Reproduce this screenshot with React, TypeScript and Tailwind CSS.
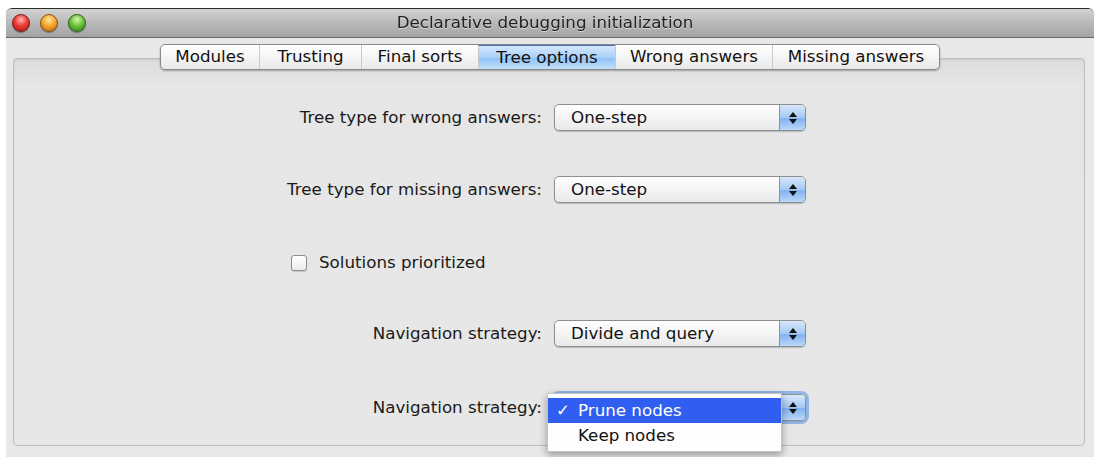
import React from 'react'

const tabs = ['Modules', 'Trusting', 'Final sorts', 'Tree options', 'Wrong answers', 'Missing answers']
const tabWidths = ['w-[98px]', 'w-[102px]', 'w-[117px]', 'w-[137px]', 'w-[157px]', 'w-[167px]']

const font = { fontFamily: '"DejaVu Sans", "Liberation Sans", sans-serif' }

const Light = ({ tone }: { tone: 'red' | 'amber' | 'green' }) => {
    const fill = {
        red: 'bg-[radial-gradient(circle_at_50%_30%,#ffb3b0_0%,#ec3b36_45%,#a8110f_100%)] border-[#7a1a18]',
        amber: 'bg-[radial-gradient(circle_at_50%_30%,#ffe6a6_0%,#f3a92b_45%,#b9600a_100%)] border-[#8a5212]',
        green: 'bg-[radial-gradient(circle_at_50%_30%,#d6f5b0_0%,#6cc23c_45%,#2f7e12_100%)] border-[#2d6618]',
    }[tone]
    return <div className={`w-[18px] h-[18px] rounded-full border ${fill} shadow-[0_1px_1px_rgba(0,0,0,0.35)]`} />
}

const Arrows = () => (
    <div className="w-[26px] h-full border-l border-[#7d96bd] rounded-r-[4px] bg-[linear-gradient(#d9e8fb,#a4c8f3_50%,#7fb1ee_51%,#b9d8f9)] flex flex-col items-center justify-center gap-[2px]">
        <svg width="8" height="5" viewBox="0 0 8 5"><path d="M4 0L8 5H0z" fill="#111" /></svg>
        <svg width="8" height="5" viewBox="0 0 8 5"><path d="M0 0h8L4 5z" fill="#111" /></svg>
    </div>
)

const Select = ({ value, focused }: { value: string; focused?: boolean }) => (
    <div
        className={`w-[252px] h-[27px] flex items-stretch rounded-[5px] border border-[#8f8f8f] bg-[linear-gradient(#ffffff,#f4f4f4_50%,#e9e9e9)] shadow-[0_1px_1px_rgba(0,0,0,0.2)] ${focused ? 'ring-[3px] ring-[#6f9fe4]/70' : ''}`}
    >
        <div className={`flex-1 flex items-center pl-4 text-[16.7px] ${focused ? 'text-[#111]/40' : 'text-[#111]'}`}>{value}</div>
        <Arrows />
    </div>
)

const Row = ({ label, children, className }: { label: string; children: React.ReactNode; className?: string }) => (
    <div className={`flex items-center h-[27px] ${className ?? ''}`}>
        <div className="w-[528px] text-right text-[16.7px] text-[#1a1a1a]">{label}</div>
        <div className="ml-[12px] relative">{children}</div>
    </div>
)

export default function App() {
    return (
        <div className="w-[1094px] h-[457px] bg-white pt-[8px] overflow-hidden" style={font}>
            <div className="ml-[6px] h-[449px] flex flex-col border-t border-[#2d2d2d] rounded-t-[6px] bg-[#e8e8e8]">
                {/* title bar */}
                <div className="h-[29px] shrink-0 flex items-center rounded-t-[5px] bg-[linear-gradient(#d3d3d3,#b9b9b9_50%,#a3a3a3)] border-b border-[#666]">
                    <div className="flex items-center gap-[10px] pl-[6px]">
                        <Light tone="red" />
                        <Light tone="amber" />
                        <Light tone="green" />
                    </div>
                    <div className="flex-1 text-center text-[16.7px] text-[#222] pr-[90px] drop-shadow-[0_1px_0_rgba(255,255,255,0.5)]">
                        Declarative debugging initialization
                    </div>
                </div>

                <div className="flex-1 pl-[7px] pr-[9px] pt-[6px]">
                    {/* tab strip */}
                    <div className="relative z-10 flex ml-[147px]">
                        <div className="flex h-[26px] rounded-[5px] border border-[#8a8a8a] overflow-hidden bg-[linear-gradient(#ffffff,#f5f5f5_50%,#e8e8e8)] shadow-[0_1px_2px_rgba(0,0,0,0.3)]">
                            {tabs.map((t, i) => (
                                <div
                                    key={t}
                                    className={`${tabWidths[i]} flex items-center justify-center text-[16.7px] text-[#111] ${i > 0 ? 'border-l border-[#c9c9c9]' : ''} ${t === 'Tree options' ? 'bg-[linear-gradient(#d6e8fd,#a9cff7_50%,#8dc0f5_51%,#c4e0fb)] border-t border-t-[#4a6fb5]' : ''}`}
                                >
                                    {t}
                                </div>
                            ))}
                        </div>
                    </div>

                    {/* tab content */}
                    <div className="-mt-[12px] h-[388px] rounded-[4px] border border-[#bdbdbd] shadow-[inset_0_1px_2px_rgba(0,0,0,0.08)] bg-[linear-gradient(#dcdcdc,#e6e6e6_7%,#e7e7e7)] pt-[45px]">
                        <Row label="Tree type for wrong answers:">
                            <Select value="One-step" />
                        </Row>
                        <Row label="Tree type for missing answers:" className="mt-[45px]">
                            <Select value="One-step" />
                        </Row>
                        <div className="mt-[46px] h-[27px] flex items-center pl-[277px] gap-[12px]">
                            <div className="w-[16px] h-[16px] rounded-[3px] border border-[#8c8c8c] bg-[linear-gradient(#ffffff,#ececec)] shadow-[0_1px_1px_rgba(0,0,0,0.15)]" />
                            <span className="text-[16.7px] text-[#1a1a1a]">Solutions prioritized</span>
                        </div>
                        <Row label="Navigation strategy:" className="mt-[44px]">
                            <Select value="Divide and query" />
                        </Row>
                        <Row label="Navigation strategy:" className="mt-[47px]">
                            <Select value="Prune nodes" focused />
                            {/* open popup menu */}
                            <div className="absolute left-[-7px] top-[-1px] w-[235px] h-[59px] bg-white/95 border border-[#c4c4c4] shadow-[0_3px_8px_rgba(0,0,0,0.35)] pt-[4px] text-[16.7px]">
                                <div className="h-[25px] flex items-center bg-[#2f5ef0] text-white pl-[8px]">
                                    <span className="w-[22px] font-bold">✓</span>
                                    <span>Prune nodes</span>
                                </div>
                                <div className="h-[26px] flex items-center text-[#111] pl-[30px]">Keep nodes</div>
                            </div>
                        </Row>
                    </div>
                </div>
            </div>
        </div>
    )
}
